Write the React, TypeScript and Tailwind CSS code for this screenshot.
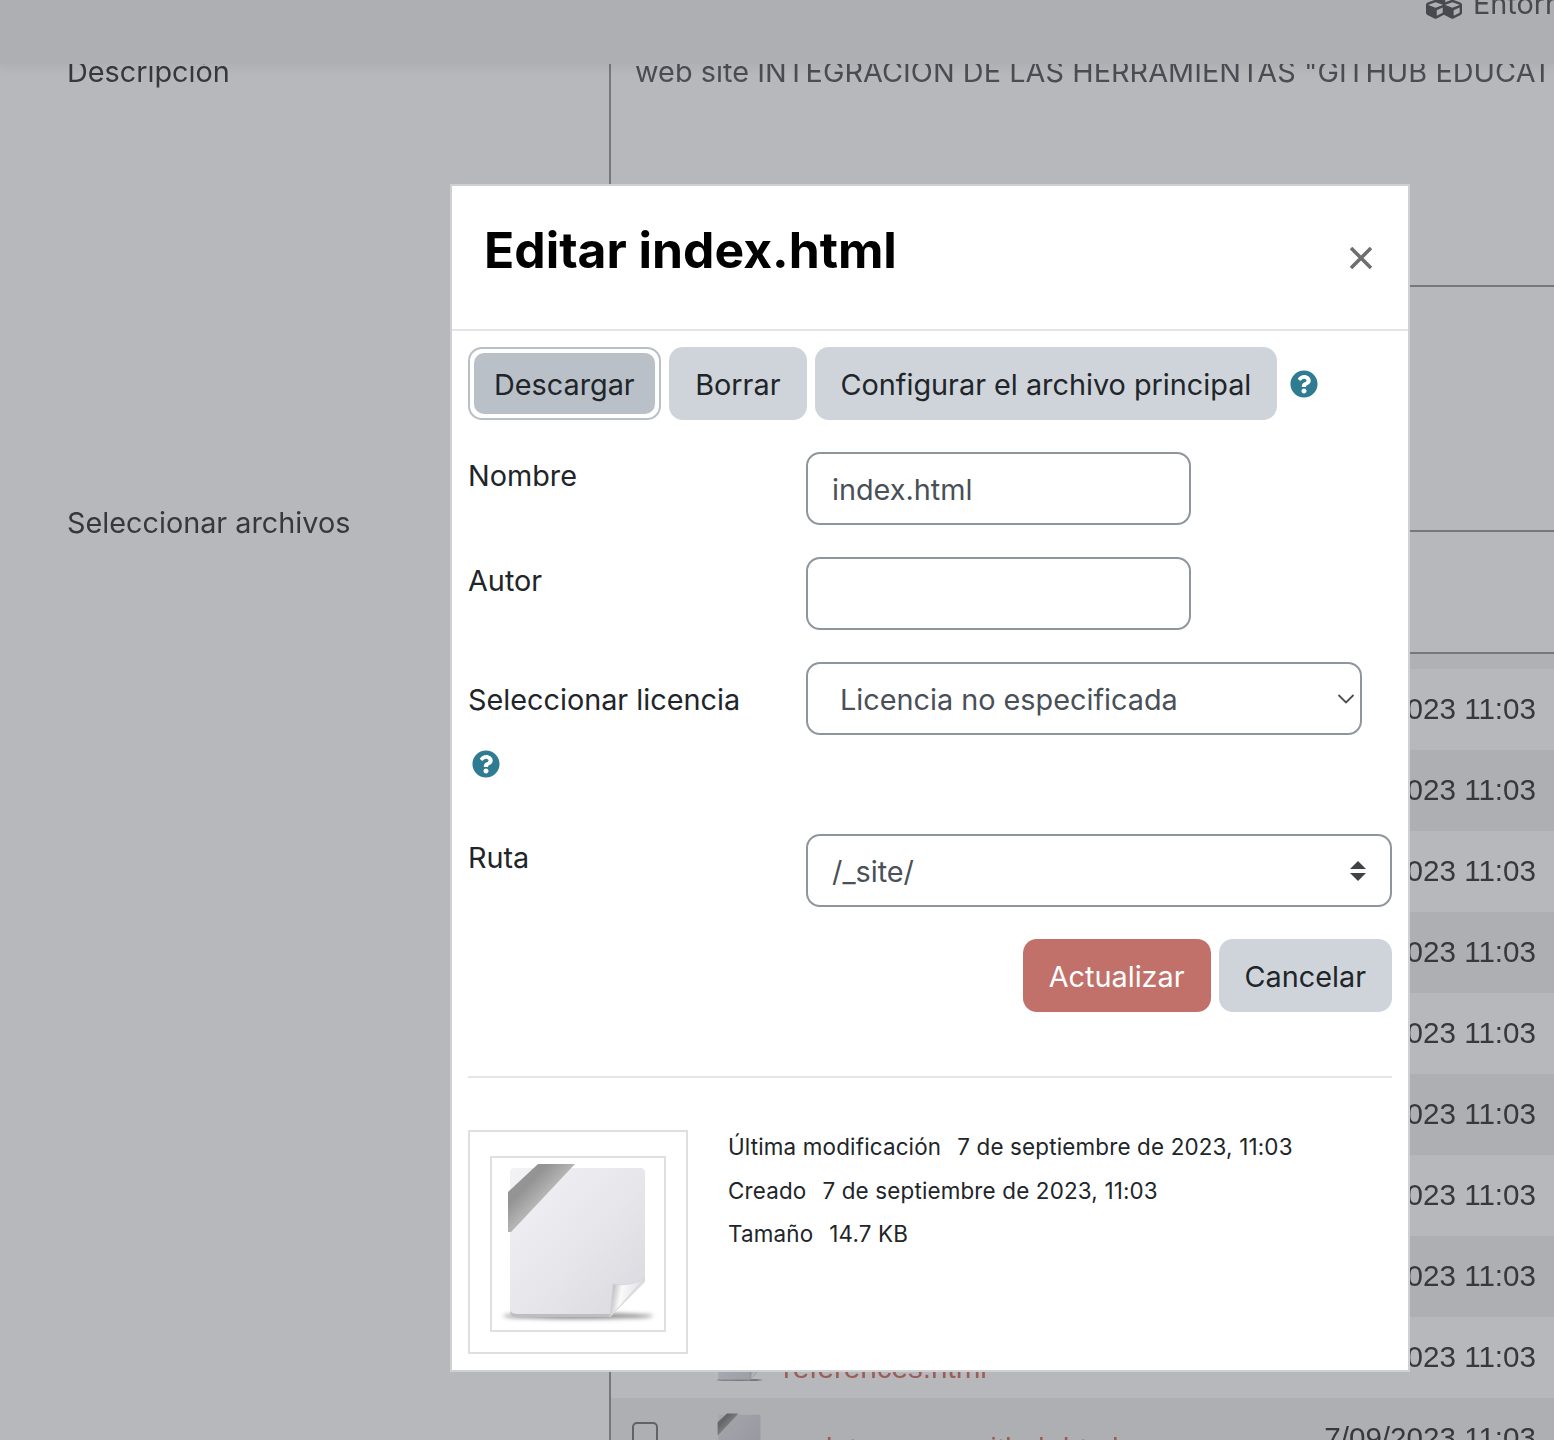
import { FaCubes, FaQuestionCircle } from 'react-icons/fa';

const date = '7/09/2023 11:03';
const names = ['', '', '', '', '', '', '', '', 'references.html', 'update-pages-github.html'];

function FileIcon({ id, className }: { id: string; className: string }) {
  return (
    <svg viewBox="0 0 176 176" className={className}>
      <defs>
        <linearGradient id={`${id}-page`} x1="0" y1="0" x2="1" y2="1">
          <stop offset="0" stopColor="#f3f3f6" />
          <stop offset="0.55" stopColor="#e5e5ea" />
          <stop offset="1" stopColor="#d8d8de" />
        </linearGradient>
        <linearGradient id={`${id}-ribbon`} x1="0" y1="0" x2="1" y2="1">
          <stop offset="0.3" stopColor="#949494" />
          <stop offset="0.5" stopColor="#b4b4b4" />
          <stop offset="0.7" stopColor="#a4a4a4" />
        </linearGradient>
        <linearGradient id={`${id}-fold`} x1="0" y1="0.4" x2="1" y2="0.6">
          <stop offset="0" stopColor="#b4b4b8" />
          <stop offset="0.3" stopColor="#fafafb" />
          <stop offset="1" stopColor="#d9d9de" />
        </linearGradient>
        <filter id={`${id}-blur`} x="-20%" y="-100%" width="140%" height="300%">
          <feGaussianBlur stdDeviation="2.2" />
        </filter>
      </defs>
      <ellipse cx="88" cy="160" rx="75" ry="3" fill="#8a8a8a" filter={`url(#${id}-blur)`} />
      <path
        d="M24 12 H150 Q155 12 155 17 V126 L120 161 H26 Q20 161 20 155 V16 Q20 12 24 12 Z"
        fill={`url(#${id}-page)`}
      />
      <path d="M20 155 Q20 161 26 161 H120 L122 158 H28 Q22 158 20 155 Z" fill="#bdbdc2" />
      <path d="M155 122 L120 161 L123 128 Q140 131 155 122 Z" fill={`url(#${id}-fold)`} stroke="#d4d4d8" strokeWidth="0.8" />
      <path d="M48 8 H85 L21 76 H18 V36 Z" fill={`url(#${id}-ribbon)`} />
    </svg>
  );
}

function HelpIcon({ className }: { className: string }) {
  return <FaQuestionCircle className={`text-[#2f7b92] ${className}`} />;
}

function Background() {
  return (
    <div className="flex h-[1440px] flex-col bg-[#b7b8bc] font-['Inter',sans-serif] text-[28.8px] text-[#36383c]">
      <header className="relative z-10 flex h-16 shrink-0 justify-end overflow-hidden bg-[#aeafb3] shadow-[0_2px_10px_2px_rgba(0,0,0,0.05)]">
        <div className="-mt-[17px] flex h-[42px] w-[128px] shrink-0 items-center gap-[11px] whitespace-nowrap text-[#46494e]">
          <FaCubes className="-mt-[2px] h-[36px] w-[36px] shrink-0" />
          <span>Entorno</span>
        </div>
      </header>
      <div className="flex min-h-0 flex-1">
        <div className="w-[609px] shrink-0 pl-[67px]">
          <div className="-mt-[9px] leading-[34px]">Descripción</div>
          <div className="mt-[417px] leading-[34px]">Seleccionar archivos</div>
        </div>
        <div className="min-w-0 flex-1 border-l-2 border-[#75797e]">
          <div className="h-[223px] overflow-hidden whitespace-nowrap border-b-2 border-[#75797e]">
            <div className="-mt-[9px] pl-[24px] leading-[34px] tracking-[0.06px] text-[#4a4e54]">
              web site INTEGRACIÓN DE LAS HERRAMIENTAS "GITHUB EDUCATION"
            </div>
          </div>
          <div className="h-[245px] border-b-2 border-[#75797e]" />
          <div className="h-[122px] border-b-2 border-[#75797e]" />
          <div className="h-[15px] bg-[#b0b1b5]" />
          {names.map((name, index) => (
            <div
              key={index}
              className={`flex h-[81px] shrink-0 items-center whitespace-nowrap pr-[18px] ${
                index % 2 === 0 ? 'bg-[#b7b8bc]' : 'bg-[#aeafb3]'
              }`}
            >
              <div className="-mt-[8px] ml-[21px] h-[26px] w-[26px] shrink-0 rounded-[5px] border-2 border-[#5f6266]" />
              <FileIcon id={`row-${index}`} className="ml-[54px] h-[55px] w-[55px] shrink-0 mix-blend-multiply" />
              <span className="ml-[16px] mt-[22px] font-['Liberation_Sans',sans-serif] text-[29.6px] text-[#9a5d59]">
                {name}
              </span>
              <span className="ml-auto font-['Liberation_Sans',sans-serif] text-[29.6px] text-[#36383c]">{date}</span>
            </div>
          ))}
        </div>
      </div>
    </div>
  );
}

function FormLabel({ children }: { children: string }) {
  return <span className="block leading-[48px] text-[#212529]">{children}</span>;
}

function Dialog() {
  return (
    <div className="absolute left-[450px] top-[184px] z-20 flex h-[1188px] w-[960px] flex-col border-2 border-[#cfd0d2] bg-white font-['Inter',sans-serif] text-[28.8px] text-[#212529]">
      <div className="flex h-[145px] shrink-0 justify-between border-b-2 border-[#e3e5e8] pl-[32px] pr-[36px]">
        <h2 className="mt-[32px] text-[49.8px] font-bold leading-[64px] text-black">Editar index.html</h2>
        <svg viewBox="0 0 22 22" className="mt-[61px] h-[22px] w-[22px] shrink-0" stroke="#6f6f6f" strokeWidth="3.6">
          <path d="M1 1 L21 21 M21 1 L1 21" />
        </svg>
      </div>

      <div className="flex flex-col px-4 pt-4">
        <div className="flex items-center gap-2">
          <div className="rounded-[14px] border-2 border-[#b9bfc7] p-1">
            <button className="h-[61px] rounded-[10px] bg-[#b9c0c8] px-[20px] pt-[2px] text-[#212529]">Descargar</button>
          </div>
          <button className="h-[73px] rounded-[14px] bg-[#ced4d9] px-[26.5px] pt-[2px]">Borrar</button>
          <button className="h-[73px] rounded-[14px] bg-[#ced4d9] px-[25.5px] pt-[2px]">Configurar el archivo principal</button>
          <HelpIcon className="ml-[5px] h-[28px] w-[28px]" />
        </div>

        <div className="mt-[32px] grid grid-cols-[338px_1fr] gap-y-[32px]">
          <FormLabel>Nombre</FormLabel>
          <div className="flex h-[73px] w-[385px] items-center rounded-[14px] border-2 border-[#8f959e] px-[24px] pt-[2px] text-[#495057]">
            index.html
          </div>
          <FormLabel>Autor</FormLabel>
          <div className="h-[73px] w-[385px] rounded-[14px] border-2 border-[#8f959e]" />
          <div className="h-[140px]">
            <div className="mt-[14px]">
              <FormLabel>Seleccionar licencia</FormLabel>
            </div>
            <HelpIcon className="ml-[4px] mt-[26px] h-[28px] w-[28px]" />
          </div>
          <div className="flex h-[73px] w-[556px] items-center justify-between rounded-[14px] border-2 border-[#8f959e] pl-[32px] pr-[5px] pt-[2px] text-[#495057]">
            Licencia no especificada
            <svg viewBox="0 0 18 12" className="-mt-[2px] h-[12px] w-[18px]" fill="none" stroke="#4b4f54" strokeWidth="1.8">
              <path d="M1.5 2 L9 9.5 L16.5 2" />
            </svg>
          </div>
          <FormLabel>Ruta</FormLabel>
          <div className="flex h-[73px] w-[586px] items-center justify-between rounded-[14px] border-2 border-[#8f959e] px-[24px] pt-[2px] text-[#495057]">
            /_site/
            <svg viewBox="0 0 16 20" className="-mt-[2px] h-[20px] w-[16px]" fill="#3f4246">
              <path d="M8 0 L16 8 H0 Z M0 12 H16 L8 20 Z" />
            </svg>
          </div>
        </div>

        <div className="mt-[32px] flex justify-end gap-2">
          <button className="h-[73px] rounded-[14px] bg-[#c1706a] px-[26px] pt-[2px] text-white">Actualizar</button>
          <button className="h-[73px] rounded-[14px] bg-[#ced4d9] px-[26px] pt-[2px]">Cancelar</button>
        </div>

        <div className="mt-[64px] border-t-2 border-[#e3e5e8]" />

        <div className="mt-[52px] flex">
          <div className="flex h-[224px] w-[220px] shrink-0 justify-center border-2 border-[#dfdfdf] pt-[24px]">
            <div className="h-[176px] w-[176px] border-2 border-[#dfdfdf]">
              <FileIcon id="preview" className="-m-[2px] h-[176px] w-[176px]" />
            </div>
          </div>
          <div className="-mt-[5px] ml-[40px] flex flex-col text-[22.4px] leading-[43.5px] tracking-[0.17px] text-[#212529]">
            <div className="flex gap-[16px]">
              <span>Última modificación</span>
              <span>7 de septiembre de 2023, 11:03</span>
            </div>
            <div className="flex gap-[16px]">
              <span>Creado</span>
              <span>7 de septiembre de 2023, 11:03</span>
            </div>
            <div className="flex gap-[16px]">
              <span>Tamaño</span>
              <span>14.7 KB</span>
            </div>
          </div>
        </div>
      </div>
    </div>
  );
}

export default function App() {
  return (
    <div className="relative h-[1440px] overflow-hidden">
      <Background />
      <Dialog />
    </div>
  );
}
